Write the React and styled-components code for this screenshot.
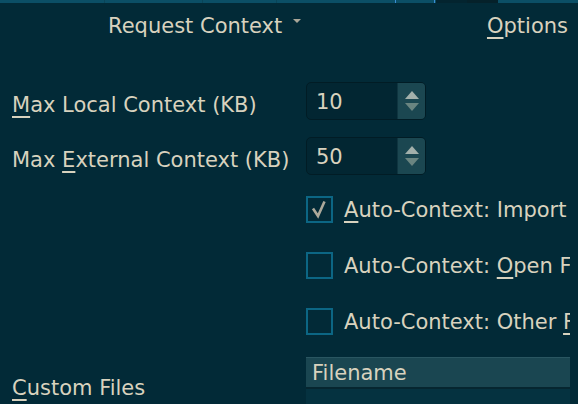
import React from "react";
import styled, { createGlobalStyle } from "styled-components";

const Global = createGlobalStyle`
  html, body { margin: 0; padding: 0; background: #022a37; }
  body { font-family: "DejaVu Sans", "Liberation Sans", sans-serif; overflow: hidden; }
`;

const Page = styled.div`
  width: 578px;
  height: 404px;
  overflow: hidden;
  background: #022a37;
  color: #d8d2be;
  font-size: 21px;
  display: flex;
  flex-direction: column;
`;

const TopBand = styled.div`
  height: 3px;
  display: flex;
  flex-shrink: 0;
`;

const Seg = styled.div`
  width: ${(p) => p.$w}px;
  flex: ${(p) => (p.$grow ? 1 : "none")};
  background: ${(p) => p.$c || "#0b4f66"};
`;

const Header = styled.div`
  height: 45px;
  display: flex;
  align-items: center;
  justify-content: space-between;
  padding: 0 10px 0 108px;
  flex-shrink: 0;
`;

const MenuTitle = styled.div`
  display: flex;
  align-items: center;
  gap: 11px;
`;

const Caret = styled.span`
  width: 0;
  height: 0;
  border-left: 4.5px solid transparent;
  border-right: 4.5px solid transparent;
  border-top: 4px solid #a9a698;
  margin-top: -10px;
`;

const U = styled.span`
  text-decoration: underline;
  text-decoration-thickness: 2px;
  text-underline-offset: 4px;
`;

const Form = styled.div`
  display: flex;
  flex-direction: column;
  padding-left: 12px;
`;

const Row = styled.div`
  display: flex;
  align-items: center;
  margin-top: ${(p) => p.$top}px;
  height: ${(p) => p.$h}px;
`;

const Label = styled.div`
  width: 294px;
  flex-shrink: 0;
  white-space: nowrap;
  padding-top: ${(p) => p.$drop || 0}px;
`;

const Spin = styled.div`
  width: 118px;
  height: 36px;
  border: 1px solid #011c25;
  border-radius: 5px;
  background: #022632;
  display: flex;
  overflow: hidden;
`;

const SpinValue = styled.div`
  flex: 1;
  padding-left: 9px;
  padding-top: 2px;
  display: flex;
  align-items: center;
`;

const Stepper = styled.div`
  width: 27px;
  background: #1b4751;
  border-left: 1px solid #0f3540;
  display: flex;
  flex-direction: column;
  align-items: center;
  justify-content: center;
  gap: 4px;
`;

const Tri = styled.span`
  width: 0;
  height: 0;
  border-left: 7px solid transparent;
  border-right: 7px solid transparent;
  ${(p) =>
    p.$up
      ? `border-bottom: 8px solid #a2b0ab;`
      : `border-top: 8px solid #6a8581;`}
`;

const CheckRow = styled.div`
  display: flex;
  align-items: center;
  gap: 11px;
  margin-left: 294px;
  margin-top: ${(p) => p.$top}px;
  height: 27px;
  width: 264px;
  overflow: hidden;
  white-space: nowrap;
`;

const Box = styled.div`
  width: 23px;
  height: 23px;
  flex-shrink: 0;
  border: 2px solid #0c6684;
  display: flex;
  align-items: center;
  justify-content: center;
`;

const BottomRow = styled.div`
  display: flex;
  margin-top: 22px;
`;

const BottomLabel = styled.div`
  width: 294px;
  padding-top: 19px;
`;

const Table = styled.div`
  width: 264px;
  display: flex;
  flex-direction: column;
`;

const TableHead = styled.div`
  height: 29px;
  background: #1a4651;
  border-top: 1px solid #2a5661;
  border-bottom: 2px solid #062630;
  padding-left: 6px;
  display: flex;
  align-items: center;
`;

const TableBody = styled.div`
  height: 40px;
  background: #053240;
`;

function SpinBox({ value }) {
  return (
    <Spin>
      <SpinValue>{value}</SpinValue>
      <Stepper>
        <Tri $up />
        <Tri />
      </Stepper>
    </Spin>
  );
}

function Check({ checked, children, top }) {
  return (
    <CheckRow $top={top}>
      <Box>
        {checked && (
          <svg width="19" height="19" viewBox="0 0 19 19">
            <path d="M3 8.5 L8 16 L14.5 1.5" fill="none" stroke="#aca99b" strokeWidth="2.6" strokeLinejoin="miter" />
          </svg>
        )}
      </Box>
      <span>{children}</span>
    </CheckRow>
  );
}

export default function App() {
  return (
    <>
      <Global />
      <Page>
        <TopBand>
          <Seg $w={104} />
          <Seg $w={1} $c="#0a4558" />
          <Seg $w={97} />
          <Seg $w={1} $c="#0a4558" />
          <Seg $w={73} />
          <Seg $w={1} $c="#0a4558" />
          <Seg $w={118} />
          <Seg $w={1} $c="#3b8ed4" />
          <Seg $w={38} />
          <Seg $w={1} $c="#3b8ed4" />
          <Seg $w={1} />
          <Seg $w={31} $c="#03242f" />
          <Seg $w={31} $c="#05212a" />
          <Seg $grow />
        </TopBand>
        <Header>
          <MenuTitle>
            Request Context
            <Caret />
          </MenuTitle>
          <div>
            <U>O</U>ptions
          </div>
        </Header>
        <Form>
          <Row $top={34} $h={38}>
            <Label $drop={7}>
              <U>M</U>ax Local Context (KB)
            </Label>
            <SpinBox value="10" />
          </Row>
          <Row $top={17} $h={38}>
            <Label $drop={7}>
              Max <U>E</U>xternal Context (KB)
            </Label>
            <SpinBox value="50" />
          </Row>
          <Check checked top={21}>
            <U>A</U>uto-Context: Import
          </Check>
          <Check top={29}>
            Auto-Context: <U>O</U>pen Files
          </Check>
          <Check top={29}>
            Auto-Context: Other <U>F</U>iles
          </Check>
          <BottomRow>
            <BottomLabel>
              <U>C</U>ustom Files
            </BottomLabel>
            <Table>
              <TableHead>Filename</TableHead>
              <TableBody />
            </Table>
          </BottomRow>
        </Form>
      </Page>
    </>
  );
}
